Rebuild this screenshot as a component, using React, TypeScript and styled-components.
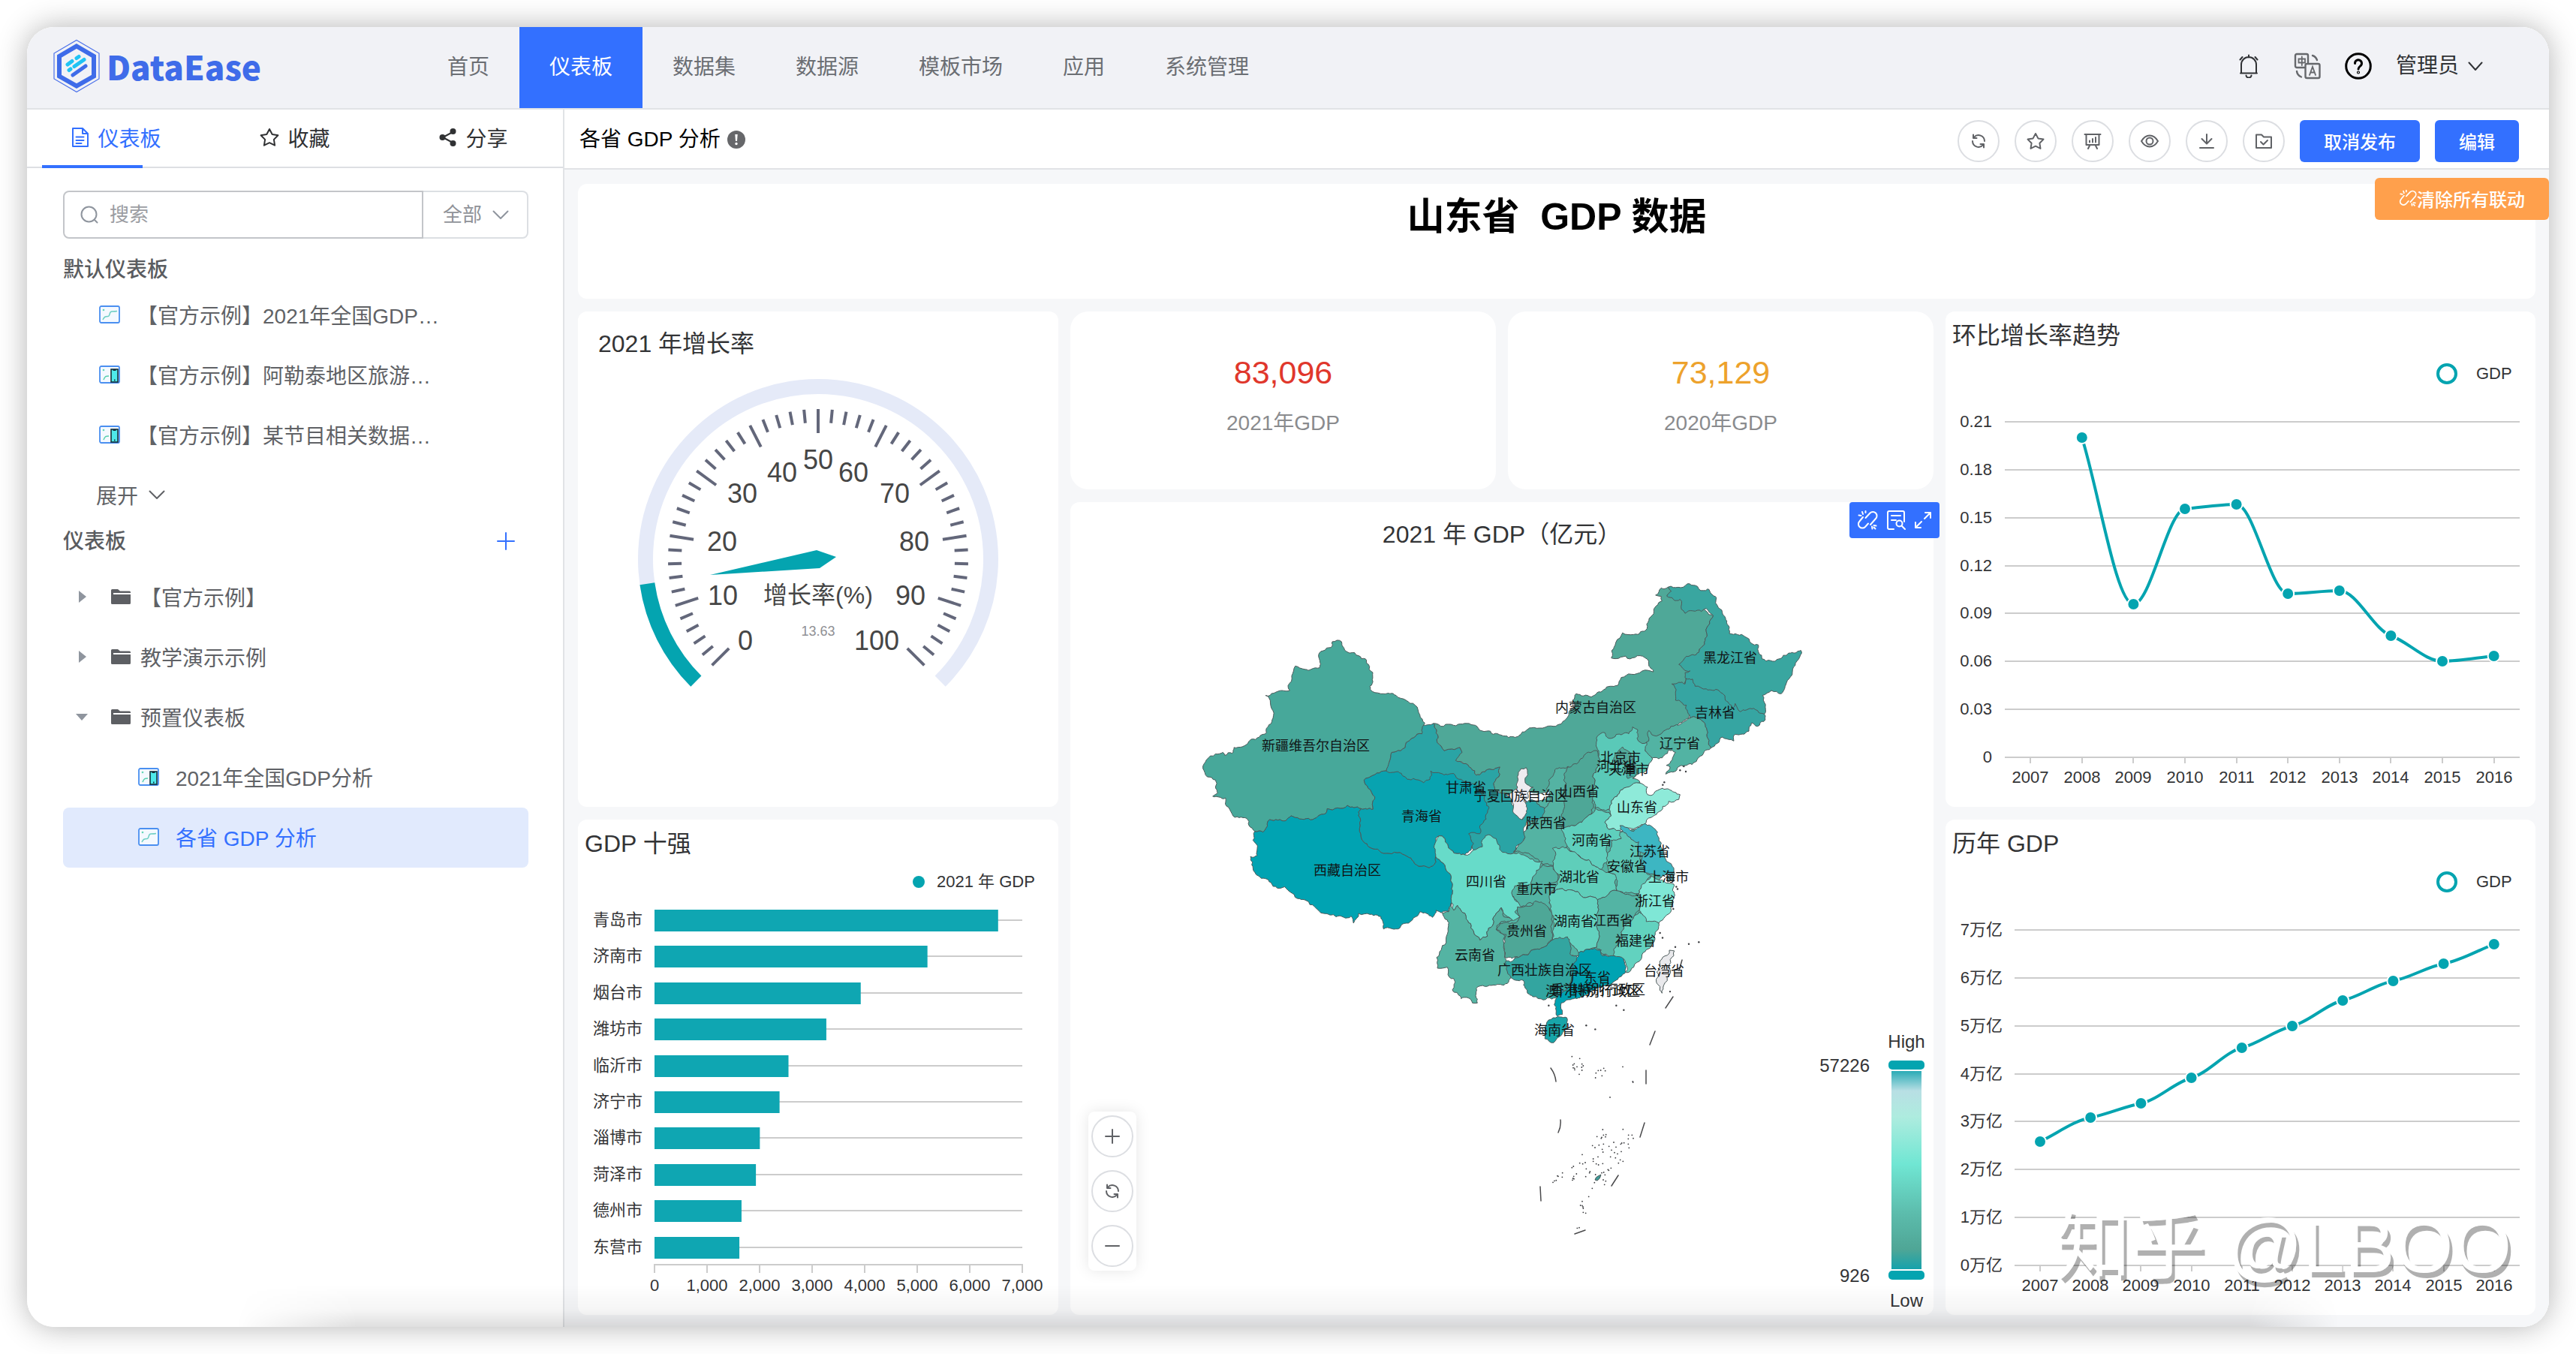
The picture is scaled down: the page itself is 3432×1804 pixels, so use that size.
import React from "react";
import styled, { createGlobalStyle } from "styled-components";

/* ---------- theme ---------- */

const font = `"Liberation Sans", "Noto Sans CJK SC", sans-serif`;
const c = {
  brand: "#3370ff",
  teal: "#04a4b0",
  text: "#606266",
  dark: "#333436",
  line: "#e1e3e6",
  grid: "#cccccc",
  canvas: "#f6f7f9",
};

const GlobalStyle = createGlobalStyle`
  * { box-sizing: border-box; }
  body { margin: 0; background: #fff; font-family: ${font}; color: ${c.text}; }
  button, input, select { font-family: inherit; }
  h1, h2, h3, p, ul { margin: 0; padding: 0; }
  ul { list-style: none; }
  a { text-decoration: none; color: inherit; }
`;

/* ---------- frame ---------- */

const Stage = styled.div`
  min-height: 100vh;
  padding: 36px;
  display: flex;
`;

const Frame = styled.div`
  position: relative;
  flex: 1;
  min-width: 0;
  display: flex;
  flex-direction: column;
  background: #fff;
  border-radius: 36px;
  overflow: hidden;
`;

const Shade = styled.div`
  flex: 1;
  min-width: 0;
  display: flex;
  border-radius: 36px;
  box-shadow: 0 0 40px rgba(0, 0, 0, 0.3);
`;

const BottomFade = styled.div`
  position: absolute;
  left: 0;
  right: 0;
  bottom: 0;
  height: 56px;
  pointer-events: none;
  background: linear-gradient(to bottom, rgba(0, 0, 0, 0), rgba(0, 0, 0, 0.04) 60%, rgba(0, 0, 0, 0.13));
  mask-image: linear-gradient(to right, transparent 280px, #000 440px, #000 calc(100% - 400px), transparent calc(100% - 280px));
`;

const Body = styled.div`
  flex: 1;
  display: flex;
  min-height: 0;
`;

/* ---------- header ---------- */

const Header = styled.header`
  display: flex;
  align-items: stretch;
  height: 110px;
  background: #f1f2f6;
  border-bottom: 2px solid ${c.line};
`;

const Brand = styled.a`
  display: flex;
  align-items: center;
  gap: 8px;
  width: 520px;
  padding: 0 0 4px 34px;
  color: #3f6ce9;
  font-family: "Noto Sans CJK SC", sans-serif;
  font-size: 44px;
  line-height: 60px;
  font-weight: 900;
`;

const Nav = styled.nav`
  display: flex;
`;

const NavLink = styled.a<{ $active?: boolean }>`
  display: flex;
  align-items: center;
  padding: 0 40px 6px;
  font-size: 28px;
  color: ${(p) => (p.$active ? "#fff" : "#6b6e73")};
  background: ${(p) => (p.$active ? c.brand : "transparent")};
`;

const HeaderTools = styled.div`
  display: flex;
  align-items: center;
  gap: 32px;
  margin-left: auto;
  padding: 0 88px 4px 0;
`;

const PlainButton = styled.button`
  display: flex;
  align-items: center;
  gap: 12px;
  padding: 0;
  border: 0;
  background: none;
  color: #303235;
  font-size: 28px;
  line-height: 40px;
  cursor: pointer;
`;

const BellButton = styled(PlainButton)`
  margin-right: 14px;
`;

const AddButton = styled(PlainButton)`
  color: ${c.brand};
`;

/* ---------- sidebar ---------- */

const Sidebar = styled.aside`
  width: 716px;
  flex: none;
  border-right: 2px solid ${c.line};
`;

const TabList = styled.div`
  position: relative;
  display: grid;
  grid-template-columns: repeat(3, 1fr);
  height: 78px;
  border-bottom: 2px solid #dddfe3;

  &::after {
    content: "";
    position: absolute;
    left: 20px;
    bottom: -2px;
    width: 134px;
    height: 4px;
    background: ${c.brand};
  }
`;

const Tab = styled.button<{ $active?: boolean }>`
  display: flex;
  align-items: center;
  justify-content: center;
  gap: 11px;
  padding: 0 0 2px;
  border: 0;
  background: none;
  font-size: 28px;
  color: ${(p) => (p.$active ? c.brand : "#303133")};
`;

const SideContent = styled.div`
  padding: 30px 46px 0 48px;
`;

const SearchRow = styled.div`
  display: flex;
  height: 64px;
  margin-bottom: 20px;
`;

const SearchBox = styled.label`
  flex: 1;
  display: flex;
  align-items: center;
  gap: 14px;
  padding-left: 20px;
  border: 2px solid #c3c5c9;
  border-radius: 8px 0 0 8px;
  color: #8f959e;
`;

const SearchInput = styled.input`
  flex: 1;
  min-width: 0;
  padding: 0;
  border: 0;
  outline: 0;
  background: none;
  font-size: 26px;
  color: ${c.text};
  &::placeholder { color: #9b9da2; }
`;

const FilterBox = styled.label`
  display: flex;
  align-items: center;
  width: 140px;
  padding: 0 24px 0 26px;
  border: 2px solid #dcdfe3;
  border-left: 0;
  border-radius: 0 8px 8px 0;
  color: #8f959e;
`;

const Filter = styled.select`
  flex: 1;
  min-width: 0;
  padding: 0;
  border: 0;
  outline: 0;
  appearance: none;
  background: none;
  font-size: 26px;
  color: #8f9298;
`;

const SectionHead = styled.div`
  display: flex;
  align-items: center;
  justify-content: space-between;
  height: 42px;
  padding-right: 18px;
`;

const SectionTitle = styled.h2`
  padding-top: 2px;
  font-size: 28px;
  line-height: 42px;
  font-weight: 500;
  color: #5a5c60;
`;

const TreeList = styled.ul`
  padding-top: 14px;
`;

const TreeRow = styled.button<{ $indent: number; $active?: boolean; $gap?: number }>`
  display: flex;
  align-items: center;
  gap: ${(p) => p.$gap ?? 22}px;
  width: 100%;
  height: 80px;
  padding: 0 118px 2px ${(p) => p.$indent}px;
  border: 0;
  border-radius: 8px;
  background: ${(p) => (p.$active ? "#e1eafd" : "transparent")};
  color: ${(p) => (p.$active ? c.brand : c.text)};
  font-size: 28px;
  text-align: left;
  cursor: pointer;
`;

const Ellipsis = styled.span`
  overflow: hidden;
  white-space: nowrap;
  text-overflow: ellipsis;
`;

const Caret = styled.span<{ $open?: boolean }>`
  width: 0;
  height: 0;
  margin-right: ${(p) => (p.$open ? 18 : 20)}px;
  margin-left: ${(p) => (p.$open ? -4 : 0)}px;
  border: solid transparent;
  border-width: ${(p) => (p.$open ? "9px 8px 0" : "8px 0 8px 10px")};
  border-${(p) => (p.$open ? "top" : "left")}-color: #8f959e;
`;

/* ---------- main column ---------- */

const Main = styled.main`
  position: relative;
  flex: 1;
  min-width: 0;
  display: flex;
  flex-direction: column;
`;

const Toolbar = styled.div`
  display: flex;
  align-items: center;
  gap: 20px;
  height: 80px;
  padding: 6px 40px 0 20px;
  border-bottom: 2px solid ${c.line};
`;

const PanelName = styled.h2`
  display: flex;
  align-items: center;
  gap: 8px;
  margin-right: auto;
  padding-bottom: 4px;
  font-size: 28px;
  line-height: 40px;
  font-weight: 400;
  color: #000;
`;

const RoundButton = styled.button`
  display: flex;
  align-items: center;
  justify-content: center;
  width: 56px;
  height: 56px;
  flex: none;
  padding: 0;
  border: 2px solid #dcdee2;
  border-radius: 50%;
  background: #fff;
  color: ${c.text};
  cursor: pointer;
`;

const SolidButton = styled.button`
  display: flex;
  align-items: center;
  height: 56px;
  padding: 0 32px 2px;
  border: 0;
  border-radius: 6px;
  background: ${c.brand};
  color: #fff;
  font-size: 24px;
  font-weight: 500;
  cursor: pointer;
`;

const ClearButton = styled(SolidButton)`
  position: absolute;
  top: 91px;
  right: 0;
  background: #ffa04c;
`;

const Board = styled.div`
  flex: 1;
  display: grid;
  grid-template-columns: 640fr 567fr 567fr 786fr;
  grid-template-rows: 153px 237px minmax(406px, 406fr) minmax(660px, 660fr);
  gap: 17px 16px;
  padding: 19px 18px 16px;
  background: ${c.canvas};
`;

const Card = styled.section<{ $area: string; $round?: number }>`
  position: relative;
  grid-area: ${(p) => p.$area};
  display: flex;
  flex-direction: column;
  min-width: 0;
  min-height: 0;
  background: #fff;
  border-radius: ${(p) => p.$round ?? 12}px;
`;

const BoardTitle = styled.h1`
  padding-top: 2px;
  text-align: center;
  white-space: pre;
  color: #000;
  font-size: 50px;
  line-height: 84px;
  font-weight: 700;
`;

const CardTitle = styled.h3<{ $pad: string; $center?: boolean }>`
  padding: ${(p) => p.$pad};
  text-align: ${(p) => (p.$center ? "center" : "left")};
  font-size: 32px;
  line-height: 40px;
  font-weight: 400;
  color: ${c.dark};
`;

const Kpi = styled(Card)`
  align-items: center;
  gap: 22px;
  padding-top: 55px;
`;

const KpiValue = styled.strong<{ $color: string }>`
  font-size: 43px;
  line-height: 52px;
  font-weight: 400;
  color: ${(p) => p.$color};
`;

const KpiLabel = styled.span`
  font-size: 28px;
  line-height: 40px;
  color: #8a8b8e;
`;

const Chart = styled.svg`
  display: block;
  flex: 1;
  width: 100%;
  min-height: 0;
  font-family: ${font};
  font-size: 22px;
  fill: ${c.dark};
`;

const CardTools = styled.div`
  position: absolute;
  top: 0;
  right: -8px;
  display: flex;
  align-items: center;
  justify-content: space-evenly;
  width: 120px;
  height: 48px;
  border-radius: 4px;
  background: ${c.brand};
`;

const ToolButton = styled(PlainButton)`
  color: #fff;
`;

const ZoomPanel = styled.div`
  position: absolute;
  left: 24px;
  bottom: 59px;
  display: flex;
  flex-direction: column;
  gap: 17px;
  padding: 5px 4px;
  border-radius: 8px;
  background: #fff;
  box-shadow: 0 0 20px rgba(0, 0, 0, 0.1);
`;

const Watermark = styled.span`
  position: absolute;
  right: 32px;
  bottom: 32px;
  color: #fff;
  font-size: 100px;
  line-height: 120px;
  white-space: nowrap;
  text-shadow: 4px 7px 0 rgba(0, 0, 0, 0.31);
  pointer-events: none;
`;

/* ---------- icons ---------- */

const Svg = styled.svg`
  display: block;
  flex: none;
`;

type IconProps = { w: number; h?: number; sw?: number; children: React.ReactNode };
const Icon = ({ w, h = w, sw = 2, children }: IconProps) => (
  <Svg width={w} height={h} viewBox={`0 0 ${w} ${h}`} fill="none" stroke="currentColor" strokeWidth={sw} strokeLinejoin="round" strokeLinecap="round" aria-hidden>
    {children}
  </Svg>
);

const Logo = () => (
  <Svg width="64" height="72" viewBox="0 0 64 72" fill="none" aria-hidden>
    <path d="M32 1.500L62 19v34L32 70.500 2 53V19z" stroke="#4a70ea" strokeWidth="1.200" />
    <path d="M32 9.500L55 23v26.500L32 62.500 9 49.500V23z" stroke="#3f6ce9" strokeWidth="6" />
    <g strokeWidth="5" strokeLinecap="round">
      <path d="M20 34l6-4.500M32 25.500l3-2" stroke="#1fc3f4" />
      <path d="M22 41.500l2-1.500M29 36.500l13-9" stroke="#1fc3f4" />
      <path d="M27 48l17-12" stroke="#3f6ce9" />
    </g>
  </Svg>
);

const Chevron = ({ w = 20 }: { w?: number }) => (
  <Icon w={w} h={14} sw={2}><path d={`M1.500 2.500L${w / 2} 12 ${w - 1.5} 2.500`} /></Icon>
);
const DocIcon = () => (
  <Icon w={24} h={28}><path d="M2 2h13l7 7v17H2zM15 2v7h7M6.500 13.500h10M6.500 18h10M6.500 22h7" /></Icon>
);
const starPath = (cx: number, cy: number, r: number) =>
  Array.from({ length: 10 }, (_, i) => {
    const a = (-90 + i * 36) * (Math.PI / 180);
    const q = i % 2 ? r * 0.52 : r;
    return `${i ? "L" : "M"}${(cx + q * Math.cos(a)).toFixed(1)} ${(cy + q * Math.sin(a)).toFixed(1)}`;
  }).join("") + "z";
const StarIcon = ({ w = 26 }: { w?: number }) => <Icon w={w}><path d={starPath(w / 2, w / 2 + 1, w / 2 - 1)} /></Icon>;
const ShareIcon = () => (
  <Icon w={24} h={26}>
    <path d="M19 5.500L5 13l14 7.500" />
    <g fill="currentColor" stroke="none"><circle cx="18.500" cy="5" r="4" /><circle cx="4.500" cy="13" r="4" /><circle cx="18.500" cy="21" r="4" /></g>
  </Icon>
);
const SearchIcon = () => <Icon w={26}><circle cx="12.500" cy="12.500" r="10" /><path d="M20 20l3.500 3.500" /></Icon>;
const PanelIcon = ({ mobile }: { mobile?: boolean }) => (
  <Svg width="28" height="24" viewBox="0 0 28 24" fill="none" aria-hidden>
    <rect x="1" y="1" width="26" height="22" rx="2" fill="#f4f9ff" stroke="#4a8ff0" strokeWidth="1.800" />
    <circle cx="6" cy="6" r="1.300" fill="#67d8b8" />
    {mobile ? (
      <>
        <path d="M6 19c2-5 3-5 7-5" stroke="#57cfae" strokeWidth="1.500" />
        <rect x="16" y="5" width="9" height="17" fill="#4fe9ea" stroke="#16303a" strokeWidth="1.600" />
        <path d="M18.500 6h4M20 19.500h1.500" stroke="#16303a" strokeWidth="2" />
      </>
    ) : (
      <path d="M5 19c2-4 3-4.500 7-4.500 3 0 1-6.500 5-6.500 3 0 5 0 7-.500" stroke="#6fcfc4" strokeWidth="1.500" />
    )}
  </Svg>
);
const FolderIcon = () => (
  <Svg width="26" height="20" viewBox="0 0 26 20" aria-hidden>
    <path d="M0 1.500Q0 0 1.500 0H9l3 2.500h12.500Q26 2.500 26 4v1H3v2h23v11.500q0 1.500-1.500 1.500h-23Q0 20 0 18.500z" fill="#5d5f63" />
  </Svg>
);
const PlusIcon = ({ w = 24 }: { w?: number }) => <Icon w={w}><path d={`M${w / 2} 1v${w - 2}M1 ${w / 2}h${w - 2}`} /></Icon>;
const MinusIcon = () => <Icon w={20}><path d="M1 10h18" /></Icon>;
const InfoIcon = () => (
  <Svg width="26" height="26" viewBox="0 0 26 26" aria-hidden>
    <circle cx="13" cy="13" r="12" fill="#66676a" />
    <path d="M11.300 6h3.400l-.700 9h-2z" fill="#fff" /><circle cx="13" cy="18.500" r="1.700" fill="#fff" />
  </Svg>
);
const BellIcon = () => (
  <Icon w={28} h={32}>
    <path d="M14 1.500v3M4 25.500V14a10 10 0 0 1 20 0v11.500M3 25.500h22M10.500 28.500a3.500 3 0 0 0 7 0M5.500 4L2.500 7.500M22.500 4l3 3.500" />
  </Icon>
);
const TranslateIcon = () => (
  <Svg width="36" height="36" viewBox="0 0 36 36" fill="none" stroke="#66686c" strokeWidth="2.400" strokeLinecap="round" aria-hidden>
    <path d="M14 20H4a2 2 0 0 1-2-2V4a2 2 0 0 1 2-2h13a2 2 0 0 1 2 2v9" />
    <rect x="15.500" y="15" width="19" height="19" rx="2" fill="#f1f2f6" />
    <path d="M6.500 8.500h8.500v5H6.500zM10.800 5.500v11.500" strokeWidth="1.800" />
    <path d="M21 30l4-11 4 11M22.500 26.500h5" strokeWidth="1.800" />
    <path d="M25 4c3 1 5 3 6 6M4 25c.500 4 2.500 6 6 7.500" />
  </Svg>
);
const HelpIcon = () => (
  <Svg width="36" height="36" viewBox="0 0 36 36" fill="none" stroke="#000" strokeWidth="3" strokeLinecap="round" aria-hidden>
    <circle cx="18" cy="18" r="16.300" />
    <path d="M13.500 14.500a4.500 4.500 0 1 1 7 3.600c-1.600 1.200-2.500 2-2.500 4" />
    <circle cx="18" cy="26.500" r=".600" />
  </Svg>
);
const RefreshIcon = () => (
  <Icon w={22}>
    <path d="M19 11a8 8 0 0 0-14-5.200M4 2.500v4.500h4.500M3 11a8 8 0 0 0 14 5.200M18 19.500V15h-4.500" />
  </Icon>
);
const BoardIcon = () => <Icon w={24}><path d="M1.500 3h21M3.500 3v14h17V3M8.500 17l-2.500 5M15.500 17l2.500 5M8 11.500v2M12 9v4.500M16 7v6.500" /></Icon>;
const EyeIcon = () => <Icon w={26}><path d="M2 13c3-5 6.500-7.500 11-7.500S21 8 24 13c-3 5-6.500 7.500-11 7.500S5 18 2 13z" /><circle cx="13" cy="13" r="4.500" /></Icon>;
const DownloadIcon = () => <Icon w={24}><path d="M12 3v12M5.500 9L12 15.500 18.500 9M3 21h18" /></Icon>;
const FolderCheckIcon = () => <Icon w={24}><path d="M2 21V3.500h7l3 3h10V21zM8 13l3.500 3.500L17 11" /></Icon>;
const UnlinkIcon = ({ w = 24 }: { w?: number }) => (
  <Svg width={w} height={w} viewBox="0 0 28 28" fill="none" stroke="currentColor" strokeWidth="2" strokeLinecap="round" aria-hidden>
    <path d="M11.500 11l6-6.500a5 5 0 0 1 7.500 7.500l-7 8M8 10l-4.500 5.500a5 5 0 0 0 7.500 7.500l4-4.500M7 3l1 3M2.500 7.500l3 .500M11.500 2v2M20.500 25.500l-.500-3M25.500 21.500l-3-.500M24.500 25.500l-2-2" />
  </Svg>
);
const DocSearchIcon = () => (
  <Icon w={28}><path d="M11 26H5a2 2 0 0 1-2-2V4a2 2 0 0 1 2-2h18a2 2 0 0 1 2 2v12M8 8h12M8 14h6M22 22l4 4" /><circle cx="18.500" cy="18.500" r="4" /></Icon>
);
const ExpandIcon = () => <Icon w={24}><path d="M15 2h7v7M22 2l-8 8M9 22H2v-7M2 22l8-8" /></Icon>;

/* ---------- gauge ---------- */

const G = { x: 1090, y: 745 };
const polar = (r: number, pct: number): [number, number] => {
  const a = ((225 - 2.7 * pct) * Math.PI) / 180;
  return [G.x + r * Math.cos(a), G.y - r * Math.sin(a)];
};
const arc = (r: number, from: number, to: number) => {
  const [x1, y1] = polar(r, from);
  const [x2, y2] = polar(r, to);
  return `M${x1} ${y1}A${r} ${r} 0 ${(to - from) * 2.7 > 180 ? 1 : 0} 1 ${x2} ${y2}`;
};
const gaugeLabels: [number, number, number][] = [
  [0, 993, 853], [10, 963, 793], [20, 962, 721], [30, 989, 657], [40, 1042, 629], [50, 1090, 612],
  [60, 1137, 629], [70, 1192, 657], [80, 1218, 721], [90, 1213, 793], [100, 1168, 853],
];

const Gauge = () => (
  <Chart viewBox="770 478 640 597" role="img" aria-label="增长率 13.63">
    <path d={arc(230, 0, 100)} fill="none" stroke="#e5eaf8" strokeWidth="20" />
    <path d={arc(230, 0, 13.63)} fill="none" stroke={c.teal} strokeWidth="20" />
    {Array.from({ length: 51 }, (_, i) => {
      const [x1, y1] = polar(200, i * 2);
      const [x2, y2] = polar(i % 5 ? 182 : 168, i * 2);
      return <line key={i} x1={x1} y1={y1} x2={x2} y2={y2} stroke="#63677a" strokeWidth="4" />;
    })}
    <g fontSize="36" fill="#464646" textAnchor="middle" dominantBaseline="central">
      {gaugeLabels.map(([v, x, y]) => <text key={v} x={x} y={y}>{v}</text>)}
    </g>
    <path d="M946 766L1088 733 1114 742 1092 757z" fill={c.teal} />
    <text x="1090" y="804" fontSize="32" fill="#464646" textAnchor="middle">增长率(%)</text>
    <text x="1090" y="847" fontSize="18" fill="#8f9094" textAnchor="middle">13.63</text>
  </Chart>
);

/* ---------- bar chart ---------- */

const cities: [string, number][] = [
  ["青岛市", 6540], ["济南市", 5195], ["烟台市", 3925], ["潍坊市", 3270], ["临沂市", 2550],
  ["济宁市", 2380], ["淄博市", 2005], ["菏泽市", 1930], ["德州市", 1656], ["东营市", 1615],
];

const BarChart = () => (
  <Chart viewBox="770 1144 640 608" role="img" aria-label="GDP 十强">
    <circle cx="1224" cy="1175" r="8" fill={c.teal} />
    <text x="1248" y="1182">2021 年 GDP</text>
    {cities.map(([name, v], i) => {
      const y = Math.round(1226 + i * 48.4);
      return (
        <g key={name}>
          <line x1="872" x2="1362" y1={y} y2={y} stroke={c.grid} strokeWidth="2" />
          <rect x="872" y={y - 14} width={v * 0.07} height="29" fill="#0fa6b2" />
          <text x="856" y={y + 7} textAnchor="end">{name}</text>
        </g>
      );
    })}
    <line x1="871" x2="1363" y1="1685" y2="1685" stroke={c.grid} strokeWidth="2" />
    {Array.from({ length: 8 }, (_, i) => (
      <g key={i}>
        <line x1={872 + i * 70} x2={872 + i * 70} y1="1685" y2="1696" stroke={c.grid} strokeWidth="2" />
        <text x={872 + i * 70} y="1720" textAnchor="middle">{(i * 1000).toLocaleString("en-US")}</text>
      </g>
    ))}
  </Chart>
);

/* ---------- line charts ---------- */

type Pt = [number, number];

/* Monotone cubic through the points, so the curve never overshoots a value. */
const monotone = (p: Pt[]) => {
  const n = p.length;
  const d = p.slice(1).map((q, i) => (q[1] - p[i][1]) / (q[0] - p[i][0]));
  const m = p.map((_, i) => {
    if (i === 0) return d[0];
    if (i === n - 1) return d[n - 2];
    const a = d[i - 1];
    const b = d[i];
    return a * b <= 0 ? 0 : Math.sign(a) * Math.min(Math.abs(a), Math.abs(b), Math.abs(a + b) / 4);
  });
  return p.reduce((s, q, i) => {
    if (!i) return `M${q[0]} ${q[1]}`;
    const o = p[i - 1];
    const h = (q[0] - o[0]) / 3;
    return `${s}C${o[0] + h} ${o[1] + m[i - 1] * h} ${q[0] - h} ${q[1] - m[i] * h} ${q[0]} ${q[1]}`;
  }, "");
};

type LineProps = {
  top: number;
  left: number;
  labelRight: number;
  firstTick: number;
  step: number;
  gridTop: number;
  legendY: number;
  labels: string[];
  points: Pt[];
  title: string;
};

const LineChart = (p: LineProps) => {
  const pitch = 63.85;
  const base = Math.round(p.gridTop + pitch * 7);
  return (
    <Chart viewBox={`2592 ${p.top} 786 608`} role="img" aria-label={p.title}>
      <circle cx="3260" cy={p.legendY} r="12" fill="none" stroke={c.teal} strokeWidth="4" />
      <text x="3299" y={p.legendY + 7}>GDP</text>
      {p.labels.map((l, i) => {
        const y = Math.round(p.gridTop + pitch * i);
        return (
          <g key={l}>
            <line x1={p.left} x2="3357" y1={y} y2={y} stroke={c.grid} strokeWidth="2" />
            <text x={p.labelRight} y={y + 7} textAnchor="end">{l}</text>
          </g>
        );
      })}
      {Array.from({ length: 10 }, (_, i) => {
        const x = Math.round(p.firstTick + i * p.step);
        return (
          <g key={i}>
            <line x1={x} x2={x} y1={base} y2={base + 8} stroke={c.grid} strokeWidth="2" />
            <text x={x} y={base + 34} textAnchor="middle">{2007 + i}</text>
          </g>
        );
      })}
      <path d={monotone(p.points)} fill="none" stroke={c.teal} strokeWidth="4" />
      {p.points.map(([x, y]) => <circle key={x} cx={x} cy={y} r="8" fill={c.teal} stroke="#fff" strokeWidth="2" />)}
    </Chart>
  );
};

const growth: Pt[] = [583, 805, 678, 672, 791, 787, 847, 881, 874].map((y, i) => [2773.8 + i * 68.6, y]);
const yearly: Pt[] = [1521, 1489, 1470, 1436, 1396, 1367, 1333, 1307, 1284, 1258].map((y, i) => [2718 + i * 67.2, y]);

/* ---------- map ---------- */

const project = (x: number, y: number): Pt => [1580 + x / 3, 740 + y / 2.306];

/* Midpoint displacement seeded by the end points: a border shared by two
   provinces gets the same wiggle whichever way it is walked. */
const rough = (a: Pt, b: Pt, out: Pt[]) => {
  const len = Math.hypot(b[0] - a[0], b[1] - a[1]);
  if (len > 4) {
    const flip = a[0] > b[0] || (a[0] === b[0] && a[1] > b[1]);
    const [p, q] = flip ? [b, a] : [a, b];
    const s = Math.sin(p[0] * 12.9898 + p[1] * 78.233 + q[0] * 37.719 + q[1] * 9.151) * 43758.5453;
    const k = (s - Math.floor(s) - 0.5) * (len > 14 ? 0.22 : 0.42);
    const m: Pt = [(p[0] + q[0]) / 2 - (q[1] - p[1]) * k, (p[1] + q[1]) / 2 + (q[0] - p[0]) * k];
    rough(a, m, out);
    rough(m, b, out);
  } else {
    out.push(b);
  }
};

const outline = (flat: string, dx = 0) => {
  const pts = flat.split(" ").map((s) => {
    const [x, y] = s.split(",").map(Number);
    return project(x + dx, y);
  });
  const out: Pt[] = [];
  pts.forEach((p, i) => rough(p, pts[(i + 1) % pts.length], out));
  return "M" + out.map(([x, y]) => `${x.toFixed(1)} ${y.toFixed(1)}`).join("L") + "z";
};

/* West-half shapes start at 0, east-half ones are offset by E. The first
   entry is the mainland ground that closes hairline gaps between provinces. */
const E = 1260;
const provinces: [string, string, number, string][] = [
  ["ground", "#52b3a3", 0, "1300,925 1350,880 1400,760 1500,710 1650,650 1810,620 1790,670 1690,760 1700,800 1720,850 1840,850 1890,960 1900,990 1850,1080 1720,1220 1560,1230 1320,1240 1290,1180 1150,1150 1290,1000"],
  ["gansu", "#2aa4a5", 0, "800,665 812,635 822,605 858,600 880,575 910,560 943,548 945,520 990,516 1008,555 1005,575 1032,600 1095,590 1104,605 1090,630 1110,640 1160,675 1205,658 1255,650 1255,672 1230,700 1240,725 1290,735 1310,770 1345,810 1360,790 1350,760 1375,752 1432,775 1425,805 1400,820 1365,815 1350,850 1350,880 1325,890 1310,915 1265,925 1150,915 1100,800 1000,700 850,690"],
  ["inner", "#4fa898", 0, "990,516 1070,522 1140,520 1200,540 1260,552 1290,560 1380,530 1470,525 1500,518 1530,485 1550,470 1545,445 1560,425 1620,435 1670,412 1725,400 1740,375 1780,365 1868,358 1850,325 1815,308 1775,318 1700,315 1705,300 1745,238 1790,243 1843,225 1850,200 1880,155 1903,140 1900,126 1877,122 1900,100 1928,97 2000,120 2108,185 2080,235 2075,262 2050,298 2010,460 2010,500 1960,530 1880,565 1850,610 1640,650 1590,640 1555,680 1500,700 1440,730 1390,730 1310,740 1240,725 1230,700 1255,672 1255,650 1205,658 1160,675 1110,640 1078,630 1104,605 1095,590 1032,600 1005,575 1008,555"],
  ["xinjiang", "#47a89a", 0, "585,265 622,265 632,285 655,300 690,308 718,318 730,335 747,360 745,382 735,402 745,418 790,425 840,430 880,445 916,460 935,490 955,515 945,527 943,548 910,560 880,575 858,600 822,605 812,635 800,662 730,683 712,690 728,715 755,742 745,765 748,780 700,778 645,768 565,778 550,795 490,808 420,800 400,815 335,812 320,838 308,850 275,848 252,830 243,808 185,795 162,770 158,745 107,740 127,730 118,690 85,680 68,655 82,628 118,610 148,605 155,614 185,608 192,590 225,588 260,565 322,545 332,520 348,500 342,470 332,438 318,430 385,415 415,415 408,400 437,340 455,346 500,350 535,345 533,300 548,293 580,283"],
  ["tibet", "#00a3b2", 0, "275,848 308,850 320,838 335,812 400,815 420,800 490,808 550,795 565,778 645,768 700,778 690,800 697,830 700,865 730,895 800,915 885,925 910,940 940,955 985,955 998,925 1028,945 1050,975 1060,1055 1050,1095 1022,1098 1000,1090 985,1112 935,1095 880,1130 855,1145 790,1148 785,1120 765,1105 735,1103 690,1100 670,1130 660,1108 600,1110 550,1100 515,1080 480,1060 455,1055 395,1018 365,1022 340,1005 290,985 268,960 258,925 285,922 285,900 268,875"],
  ["qinghai", "#08a3b0", 0, "700,778 748,780 745,765 755,742 728,715 712,690 730,683 800,662 850,665 885,688 930,690 950,698 975,688 978,662 1020,670 1070,670 1100,688 1140,700 1165,710 1195,740 1212,775 1200,810 1175,830 1175,855 1130,855 1150,885 1140,905 1115,920 1060,905 1035,870 1010,862 998,870 1002,890 998,925 985,955 940,955 910,940 885,925 800,915 730,895 700,865 697,830 690,800"],
  ["ningxia", "#efecf0", 0, "1340,655 1360,652 1365,668 1355,690 1365,705 1388,712 1365,730 1368,745 1350,755 1362,790 1345,812 1308,790 1303,750 1280,738 1325,715 1325,680"],
  ["heilongjiang", "#39a6a0", E, "668,97 745,87 775,92 790,103 825,103 860,130 868,160 885,180 908,215 912,240 975,250 1000,270 1028,275 1030,300 1043,318 1110,318 1150,300 1198,292 1182,325 1165,350 1150,380 1120,425 1080,415 1045,430 1052,488 1010,490 900,480 800,430 735,395 735,375 735,360 755,355 730,350 710,335 740,310 790,298 815,262 820,235 848,185 820,163 800,172 735,178 720,165 715,135 688,135 662,125 680,110"],
  ["jilin", "#36a5a2", E, "682,395 710,390 735,395 740,378 765,380 775,402 820,410 870,415 895,440 925,470 935,455 955,480 980,475 1010,470 1052,488 1050,510 1025,525 1000,515 990,540 935,550 930,570 885,558 838,592 825,545 805,510 770,495 755,500 740,460 697,445 697,420"],
  ["liaoning", "#52b3a3", E, "590,538 620,555 700,520 755,500 770,495 805,510 825,545 838,592 790,620 775,635 720,645 680,665 658,672 675,650 660,645 697,605 670,598 630,625 600,625 580,610 575,580 590,570"],
  ["hebei", "#5ac9b8", E, "385,555 415,545 430,562 460,550 510,548 525,527 545,535 548,570 582,575 575,600 605,625 585,655 540,675 525,685 555,698 490,715 450,745 432,780 375,775 368,725 375,690 365,680 385,650 390,600 380,580"],
  ["beijing", "#53ab9c", E, "455,610 485,588 515,605 525,630 490,642 455,635"],
  ["tianjin", "#42a89d", E, "495,635 530,625 540,655 530,682 505,685 495,665"],
  ["shaanxi", "#54b3a3", E, "268,648 220,655 190,690 180,718 195,740 185,770 172,780 165,805 105,820 90,850 85,880 50,910 110,915 150,935 208,955 230,925 262,895 262,870 260,842 260,790 255,740 260,700"],
  ["shanxi", "#4ea797", E, "330,615 385,600 390,620 385,650 365,680 375,690 368,725 370,770 360,795 330,812 240,842 247,790 245,740 260,700 250,690 268,650 295,640"],
  ["henan", "#5fcfbd", E, "375,775 432,790 440,800 415,820 425,838 475,845 480,870 440,875 420,900 430,930 400,965 350,935 320,930 265,895 258,870 240,842 330,812 360,795"],
  ["shandong", "#8eead9", E, "432,780 450,745 490,715 530,700 570,705 585,712 585,735 610,732 645,715 670,718 715,735 710,750 670,755 625,790 600,805 572,828 530,840 475,845 425,838 415,820 440,800"],
  ["anhui", "#5cc7b6", E, "440,880 480,870 475,850 500,845 550,880 560,940 580,975 600,985 580,1010 560,1020 550,1040 520,1035 462,1035 455,980 428,975 425,915"],
  ["jiangsu", "#3db6c2", E, "475,830 495,835 530,848 578,825 625,850 640,885 655,930 690,960 690,975 640,990 580,975 560,940 575,915 545,910 550,880 505,862"],
  ["zhejiang", "#7fe7d6", E, "560,1020 600,985 650,1000 690,1010 690,1050 680,1090 655,1110 630,1130 570,1125 552,1090 550,1040"],
  ["shanghai", "#5a9fa5", E, "660,985 690,972 692,1000 665,1003"],
  ["jiangxi", "#53b4a4", E, "385,1058 430,1040 462,1030 480,1035 550,1040 552,1090 530,1110 490,1140 475,1180 460,1200 452,1240 405,1225 395,1210 380,1205 385,1150"],
  ["fujian", "#62d2bf", E, "490,1140 530,1110 552,1095 575,1110 580,1125 630,1130 612,1170 600,1200 560,1240 530,1265 500,1282 490,1240 452,1235 460,1200 475,1180"],
  ["hubei", "#5fceba", E, "205,900 262,898 320,930 350,935 400,965 455,980 462,1030 430,1040 385,1058 345,1050 290,1030 230,1025 197,1040 225,1010 230,980 208,955 215,925"],
  ["hunan", "#62d2bf", E, "197,1040 230,1025 290,1030 345,1050 385,1058 385,1150 380,1205 345,1210 310,1220 275,1190 205,1180 200,1100"],
  ["sichuan", "#67dbc9", 0, "1010,862 1035,870 1060,905 1115,920 1150,905 1185,895 1190,870 1210,858 1240,870 1265,912 1310,915 1350,920 1425,940 1418,965 1385,990 1380,1010 1315,1018 1305,1045 1340,1075 1315,1095 1335,1110 1300,1120 1270,1100 1260,1082 1240,1100 1210,1145 1205,1170 1175,1182 1150,1155 1120,1110 1085,1075 1070,1090 1060,1055 1050,975 1028,945 998,925 998,880"],
  ["chongqing", "#52b3a3", E, "165,950 208,955 228,985 225,1000 185,1010 197,1040 195,1095 140,1065 80,1080 45,1045 55,1015 120,1010 125,990"],
  ["yunnan", "#54b4a3", 0, "1060,1068 1070,1090 1085,1075 1120,1110 1150,1155 1175,1182 1205,1170 1210,1145 1240,1100 1260,1082 1270,1110 1305,1120 1255,1130 1240,1150 1275,1170 1270,1200 1280,1245 1310,1280 1300,1295 1285,1315 1230,1320 1160,1330 1165,1375 1145,1375 1130,1360 1100,1362 1065,1335 1070,1300 1052,1295 1045,1265 1005,1268 1002,1235 1040,1190 1045,1120 1025,1098 1050,1095"],
  ["guizhou", "#4ea797", 0, "1255,1130 1310,1130 1335,1110 1325,1080 1370,1078 1395,1062 1420,1065 1460,1095 1458,1140 1465,1180 1445,1195 1400,1210 1330,1235 1275,1235 1270,1195 1280,1165 1242,1150"],
  ["guangxi", "#33a5a0", E, "15,1250 70,1235 140,1210 185,1195 205,1182 265,1172 275,1190 275,1225 305,1235 285,1290 265,1330 220,1360 150,1362 105,1345 92,1310 40,1298 20,1270"],
  ["guangdong", "#00a3b2", E, "310,1220 345,1210 400,1212 405,1230 450,1230 490,1240 497,1280 460,1305 420,1320 370,1335 320,1355 270,1365 240,1375 245,1410 225,1415 212,1380 225,1355 265,1330 285,1290 290,1255"],
  ["hainan", "#18a5a9", E, "175,1450 200,1425 235,1418 262,1420 265,1440 240,1475 210,1497 175,1485"],
  ["taiwan", "#e9e9ec", E, "692,1215 690,1230 670,1290 650,1320 643,1345 635,1325 620,1310 622,1280 645,1235 672,1213"],
];

const mapLabels: [string, number, number][] = [
  ["新疆维吾尔自治区", 519, 583], ["西藏自治区", 646, 966], ["青海省", 941, 801], ["甘肃省", 1120, 713],
  ["宁夏回族自治区", 1338, 737], ["四川省", 1200, 1001], ["重庆市", 1402, 1024], ["贵州省", 1363, 1154],
  ["云南省", 1154, 1227], ["陕西省", 1441, 820], ["内蒙古自治区", 1638, 466], ["黑龙江省", 2175, 314],
  ["吉林省", 2116, 482], ["辽宁省", 1974, 577], ["北京市", 1736, 620], ["河北省", 1723, 648],
  ["天津市", 1769, 658], ["山西省", 1572, 723], ["山东省", 1803, 773], ["河南省", 1623, 873],
  ["江苏省", 1853, 909], ["安徽省", 1764, 955], ["上海市", 1929, 986], ["湖北省", 1571, 988],
  ["浙江省", 1876, 1061], ["湖南省", 1551, 1123], ["江西省", 1707, 1121], ["福建省", 1796, 1182],
  ["台湾省", 1912, 1276], ["广西壮族自治区", 1435, 1273], ["广东省", 1617, 1296],
  ["香港特别行政区", 1646, 1332], ["澳门特别行政区", 1625, 1338], ["海南省", 1474, 1457],
];

const seaDashes =
  "M2066 1423q6 8 7 18M2193 1426v18M2079 1492q1 9-3 17M2191 1496l-6 19M2156 1566l-9 14M2052 1581l1 19M2098 1644l14-5M2205 1374l-7 18M2229 1328l-10 15M2241 1279l-4 14";

const islets =
  "793,113 824,121 797,147 802,142 798,158 803,160 804,166 813,154 833,143 838,150 832,156 833,168 822,184 889,179 898,169 908,168 920,160 926,170 913,190 887,198 996,154 1036,213 1037,216 945,276 916,405 997,404 893,433 912,436 910,440 919,427 927,434 929,425 1019,427 1033,427 1018,442 1038,440 875,469 885,477 901,467 919,463 914,484 917,495 941,472 960,456 969,475 951,487 963,497 988,463 992,459 1001,458 1018,463 1021,478 990,493 975,502 947,514 967,518 986,526 997,532 979,539 897,514 878,522 878,532 890,542 899,546 916,541 834,505 824,539 836,542 846,537 793,557 799,552 755,578 754,595 735,590 738,592 811,582 800,592 797,600 795,607 801,602 848,593 850,562 863,578 865,573 887,585 912,578 920,576 925,586 937,565 940,568 949,559 717,616 723,610 730,608 918,606 928,611 923,625 883,617 874,640 860,673 834,692 827,708 834,709 837,714 838,720 838,736 848,739 814,799 822,797";

const offshore =
  "1450,1383 1720,1383 1750,1397 1600,1444 1636,1456 1906,705 1912,697 1975,660 1990,648 1998,664 1956,1203 2010,1194 2050,1188 1965,1025 1960,1018 1948,1086 1905,1175 1895,1160 1935,1340";

const MapChart = () => (
  <Chart viewBox="1426 732 1150 1020" role="img" aria-label="2021 年 GDP（亿元）">
    <defs>
      <linearGradient id="scale" x1="0" y1="0" x2="0" y2="1">
        <stop offset="0" stopColor="#2babb6" />
        <stop offset="0.1" stopColor="#b8dfe4" />
        <stop offset="0.23" stopColor="#aeecdf" />
        <stop offset="0.47" stopColor="#70e6d3" />
        <stop offset="0.72" stopColor="#5cbcac" />
        <stop offset="0.9" stopColor="#4fa696" />
        <stop offset="1" stopColor="#16a2ac" />
      </linearGradient>
    </defs>
    <g stroke="#4c5a5a" strokeWidth="1" strokeLinejoin="round">
      {provinces.map(([id, fill, dx, pts]) => <path key={id} d={outline(pts, dx)} fill={fill} />)}
      <path d="M2125 1572q1-4 4-5l4-2q-1 6-5 8z" fill="#3f9a98" />
    </g>
    <path d={seaDashes} fill="none" stroke="#4a4a4c" strokeWidth="1.500" strokeLinecap="round" />
    <g fill="#3c3d40">
      {islets.split(" ").map((s) => {
        const [x, y] = s.split(",").map(Number);
        return <circle key={s} cx={1830 + x / 3} cy={1370 + y / 3} r="0.9" />;
      })}
      {offshore.split(" ").map((s) => {
        const [x, y] = s.split(",").map(Number);
        const [px, py] = project(x, y);
        return <circle key={s} cx={px} cy={py} r="1.2" />;
      })}
    </g>
    <g fontSize="18" fill="#101314" textAnchor="middle">
      {mapLabels.map(([name, x, y]) => {
        const [px, py] = project(x, y);
        return <text key={name} x={Math.round(px)} y={Math.round(py) + 7}>{name}</text>;
      })}
    </g>
    <g fontSize="24">
      <text x="2540" y="1396" textAnchor="middle">High</text>
      <text x="2491" y="1428" textAnchor="end">57226</text>
      <text x="2491" y="1708" textAnchor="end">926</text>
      <text x="2540" y="1741" textAnchor="middle">Low</text>
    </g>
    <rect x="2520" y="1427" width="40" height="264" fill="url(#scale)" />
    <rect x="2516" y="1413" width="48" height="12" rx="5" fill={c.teal} />
    <rect x="2516" y="1693" width="48" height="12" rx="5" fill={c.teal} />
  </Chart>
);

/* ---------- page ---------- */

const navItems = ["首页", "仪表板", "数据集", "数据源", "模板市场", "应用", "系统管理"];

export default function App() {
  return (
    <Stage>
      <GlobalStyle />
      <Shade>
        <Frame>
          <Header>
            <Brand href="#"><Logo />DataEase</Brand>
            <Nav>
              {navItems.map((n) => <NavLink key={n} href="#" $active={n === "仪表板"}>{n}</NavLink>)}
            </Nav>
            <HeaderTools>
              <BellButton aria-label="消息"><BellIcon /></BellButton>
              <PlainButton aria-label="语言"><TranslateIcon /></PlainButton>
              <PlainButton aria-label="帮助"><HelpIcon /></PlainButton>
              <PlainButton>管理员<Chevron /></PlainButton>
            </HeaderTools>
          </Header>

          <Body>
            <Sidebar>
              <TabList role="tablist">
                <Tab role="tab" aria-selected $active><DocIcon />仪表板</Tab>
                <Tab role="tab"><StarIcon />收藏</Tab>
                <Tab role="tab"><ShareIcon />分享</Tab>
              </TabList>
              <SideContent>
                <SearchRow>
                  <SearchBox><SearchIcon /><SearchInput type="text" placeholder="搜索" aria-label="搜索" /></SearchBox>
                  <FilterBox>
                    <Filter aria-label="类型" defaultValue="全部"><option>全部</option></Filter>
                    <Chevron w={22} />
                  </FilterBox>
                </SearchRow>
                <SectionHead><SectionTitle>默认仪表板</SectionTitle></SectionHead>
                <ul>
                  <li><TreeRow $indent={48}><PanelIcon /><Ellipsis>【官方示例】2021年全国GDP分析</Ellipsis></TreeRow></li>
                  <li><TreeRow $indent={48}><PanelIcon mobile /><Ellipsis>【官方示例】阿勒泰地区旅游数据分析</Ellipsis></TreeRow></li>
                  <li><TreeRow $indent={48}><PanelIcon mobile /><Ellipsis>【官方示例】某节目相关数据分析</Ellipsis></TreeRow></li>
                  <li><TreeRow $indent={44} $gap={14}>展开<Chevron w={22} /></TreeRow></li>
                </ul>
                <SectionHead>
                  <SectionTitle>仪表板</SectionTitle>
                  <AddButton aria-label="新建"><PlusIcon /></AddButton>
                </SectionHead>
                <TreeList>
                  <li><TreeRow $indent={21} $gap={13}><Caret /><FolderIcon />【官方示例】</TreeRow></li>
                  <li><TreeRow $indent={21} $gap={13}><Caret /><FolderIcon />教学演示示例</TreeRow></li>
                  <li><TreeRow $indent={21} $gap={13}><Caret $open /><FolderIcon />预置仪表板</TreeRow></li>
                  <li><TreeRow $indent={100}><PanelIcon mobile />2021年全国GDP分析</TreeRow></li>
                  <li><TreeRow $indent={100} $active><PanelIcon />各省 GDP 分析</TreeRow></li>
                </TreeList>
              </SideContent>
            </Sidebar>

            <Main>
              <Toolbar>
                <PanelName>各省 GDP 分析<InfoIcon /></PanelName>
                <RoundButton aria-label="刷新"><RefreshIcon /></RoundButton>
                <RoundButton aria-label="收藏"><StarIcon w={24} /></RoundButton>
                <RoundButton aria-label="演示"><BoardIcon /></RoundButton>
                <RoundButton aria-label="预览"><EyeIcon /></RoundButton>
                <RoundButton aria-label="下载"><DownloadIcon /></RoundButton>
                <RoundButton aria-label="另存"><FolderCheckIcon /></RoundButton>
                <SolidButton>取消发布</SolidButton>
                <SolidButton>编辑</SolidButton>
              </Toolbar>

              <Board>
                <Card $area="1 / 1 / 2 / 5"><BoardTitle>山东省  GDP 数据</BoardTitle></Card>
                <Card $area="2 / 1 / 4 / 2">
                  <CardTitle $pad="23px 27px 0">2021 年增长率</CardTitle>
                  <Gauge />
                </Card>
                <Kpi $area="2 / 2 / 3 / 3" $round={24}>
                  <KpiValue $color="#e0372c">83,096</KpiValue>
                  <KpiLabel>2021年GDP</KpiLabel>
                </Kpi>
                <Kpi $area="2 / 3 / 3 / 4" $round={24}>
                  <KpiValue $color="#eda22c">73,129</KpiValue>
                  <KpiLabel>2020年GDP</KpiLabel>
                </Kpi>
                <Card $area="2 / 4 / 4 / 5">
                  <CardTitle $pad="12px 9px 0">环比增长率趋势</CardTitle>
                  <LineChart
                    title="环比增长率趋势" top={467} left={2671} labelRight={2654} firstTick={2705.2} step={68.6}
                    gridTop={562} legendY={498} points={growth}
                    labels={["0.21", "0.18", "0.15", "0.12", "0.09", "0.06", "0.03", "0"]}
                  />
                </Card>
                <Card $area="4 / 1 / 5 / 2">
                  <CardTitle $pad="12px 9px 0">GDP 十强</CardTitle>
                  <BarChart />
                </Card>
                <Card $area="3 / 2 / 5 / 4">
                  <CardTitle $pad="23px 0 0" $center>2021 年 GDP（亿元）</CardTitle>
                  <MapChart />
                  <CardTools>
                    <ToolButton aria-label="取消联动"><UnlinkIcon w={28} /></ToolButton>
                    <ToolButton aria-label="查看数据"><DocSearchIcon /></ToolButton>
                    <ToolButton aria-label="放大"><ExpandIcon /></ToolButton>
                  </CardTools>
                  <ZoomPanel>
                    <RoundButton aria-label="放大地图"><PlusIcon w={20} /></RoundButton>
                    <RoundButton aria-label="重置地图"><RefreshIcon /></RoundButton>
                    <RoundButton aria-label="缩小地图"><MinusIcon /></RoundButton>
                  </ZoomPanel>
                </Card>
                <Card $area="4 / 4 / 5 / 5">
                  <CardTitle $pad="12px 9px 0">历年 GDP</CardTitle>
                  <LineChart
                    title="历年 GDP" top={1144} left={2684} labelRight={2668} firstTick={2718} step={67.2}
                    gridTop={1239} legendY={1175} points={yearly}
                    labels={["7万亿", "6万亿", "5万亿", "4万亿", "3万亿", "2万亿", "1万亿", "0万亿"]}
                  />
                  <Watermark>知乎 @LBOO</Watermark>
                </Card>
              </Board>
              <ClearButton><UnlinkIcon />清除所有联动</ClearButton>
            </Main>
          </Body>
          <BottomFade />
        </Frame>
      </Shade>
    </Stage>
  );
}
